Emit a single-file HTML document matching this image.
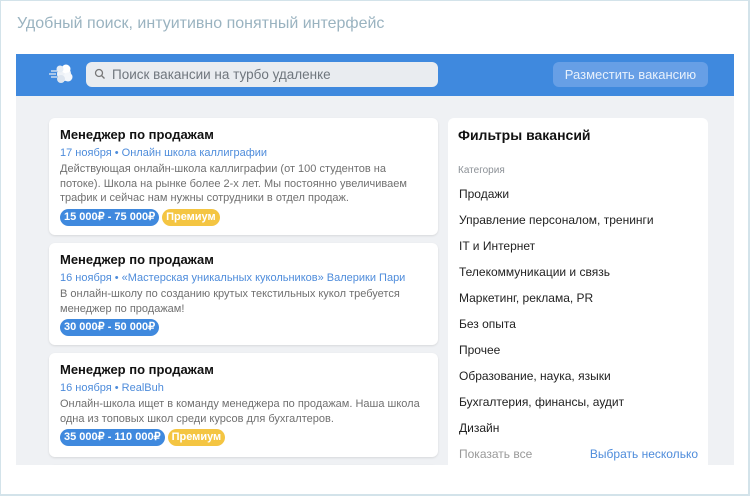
<!DOCTYPE html>
<html><head><meta charset="utf-8"><style>
*{margin:0;padding:0;box-sizing:border-box}
body{width:750px;height:496px;background:#fff;font-family:"Liberation Sans",sans-serif;position:relative;overflow:hidden}
.frame{position:absolute;left:0;top:0;width:750px;height:496px;border:1px solid #d3e3ea;border-width:1px 2px 2px 1px}
.h{position:absolute;left:17px;top:15px;font-size:16px;color:#9ab3c0}
.bar{position:absolute;left:16px;top:54px;width:718px;height:42px;background:#3f89de}
.search{position:absolute;left:86px;top:62px;width:352px;height:25px;background:#e9ecf0;border-radius:6px;font-size:13.5px;color:#6f767d;padding:5px 0 0 26px}
.btn{position:absolute;left:553px;top:62px;width:155px;height:25px;background:#679fe6;border-radius:6px;color:#e8f1fc;font-size:13px;text-align:center;line-height:25px}
.area{position:absolute;left:16px;top:96px;width:718px;height:369px;background:#eff1f4;overflow:hidden}
.card{position:absolute;left:33px;width:389px;background:#fff;border-radius:6px;box-shadow:0 1px 2px rgba(0,0,0,.1);padding:8px 11px}
.t{font-size:13px;font-weight:bold;color:#111;line-height:18px}
.m{font-size:11px;color:#4e8cdb;line-height:18px}
.d{font-size:11px;color:#707070;line-height:14.5px}
.tags{margin-top:3px;display:flex;gap:3px}
.s{background:#3f89de;color:#fff;font-size:11px;font-weight:bold;border-radius:9px;padding:0 4px;height:17px;line-height:17px}
.p{background:#f4c542;color:#fff;font-size:11px;font-weight:bold;border-radius:9px;padding:0 4px;height:17px;line-height:17px}
.f{position:absolute;left:432px;top:22px;width:260px;height:360px;background:#fff;border-radius:6px;padding:9px 10px}
.ft{font-size:14px;font-weight:bold;color:#111;margin-top:0}
.fc{font-size:10px;color:#8b9096;margin-top:22px}
.fi{font-size:12px;color:#222;height:26px;line-height:26px;padding-left:1px}
</style></head><body>
<div class="h">Удобный поиск, интуитивно понятный интерфейс</div>
<div class="bar"></div>
<svg style="position:absolute;left:48px;top:62px" width="26" height="24"><circle cx="16" cy="12" r="7" fill="#eef2f7"/><circle cx="18" cy="7" r="4.5" fill="#fff"/><circle cx="20" cy="15" r="4.5" fill="#f4f7fb"/><circle cx="13" cy="17" r="4" fill="#dde5ef"/><circle cx="12" cy="7" r="3.5" fill="#e6edf5"/><g stroke="#dfe7f1" stroke-width="1.3"><line x1="3" y1="9" x2="9" y2="9"/><line x1="1" y1="12" x2="8" y2="12"/><line x1="3" y1="15" x2="9" y2="15"/></g></svg>
<div class="search">Поиск вакансии на турбо удаленке</div>
<svg style="position:absolute;left:94px;top:68px" width="12" height="12"><circle cx="5" cy="5" r="3.5" fill="none" stroke="#777" stroke-width="1.3"/><line x1="7.5" y1="7.5" x2="10.5" y2="10.5" stroke="#777" stroke-width="1.3"/></svg>
<div class="btn">Разместить вакансию</div>
<div class="area">
<div class="card" style="top:22px;height:117px"><div class="t">Менеджер по продажам</div><div class="m">17 ноября • Онлайн школа каллиграфии</div><div class="d">Действующая онлайн-школа каллиграфии (от 100 студентов на потоке). Школа на рынке более 2-х лет. Мы постоянно увеличиваем трафик и сейчас нам нужны сотрудники в отдел продаж.</div><div class="tags"><span class="s">15 000₽ - 75 000₽</span><span class="p">Премиум</span></div></div>
<div class="card" style="top:147px;height:102px"><div class="t">Менеджер по продажам</div><div class="m">16 ноября • «Мастерская уникальных кукольников» Валерики Пари</div><div class="d">В онлайн-школу по созданию крутых текстильных кукол требуется менеджер по продажам!</div><div class="tags"><span class="s">30 000₽ - 50 000₽</span></div></div>
<div class="card" style="top:257px;height:104px"><div class="t">Менеджер по продажам</div><div class="m">16 ноября • RealBuh</div><div class="d">Онлайн-школа ищет в команду менеджера по продажам. Наша школа одна из топовых школ среди курсов для бухгалтеров.</div><div class="tags"><span class="s">35 000₽ - 110 000₽</span><span class="p">Премиум</span></div></div>
<div class="card" style="top:369px;height:40px"></div>
<div class="f"><div class="ft">Фильтры вакансий</div><div class="fc">Категория</div>
<div style="margin-top:5px">
<div class="fi">Продажи</div><div class="fi">Управление персоналом, тренинги</div><div class="fi">IT и Интернет</div><div class="fi">Телекоммуникации и связь</div><div class="fi">Маркетинг, реклама, PR</div><div class="fi">Без опыта</div><div class="fi">Прочее</div><div class="fi">Образование, наука, языки</div><div class="fi">Бухгалтерия, финансы, аудит</div><div class="fi">Дизайн</div>
<div class="fi" style="display:flex;justify-content:space-between;color:#999"><span>Показать все</span><span style="color:#4e8cdb">Выбрать несколько</span></div>
</div></div>
</div>
<div class="frame"></div>
</body></html>
